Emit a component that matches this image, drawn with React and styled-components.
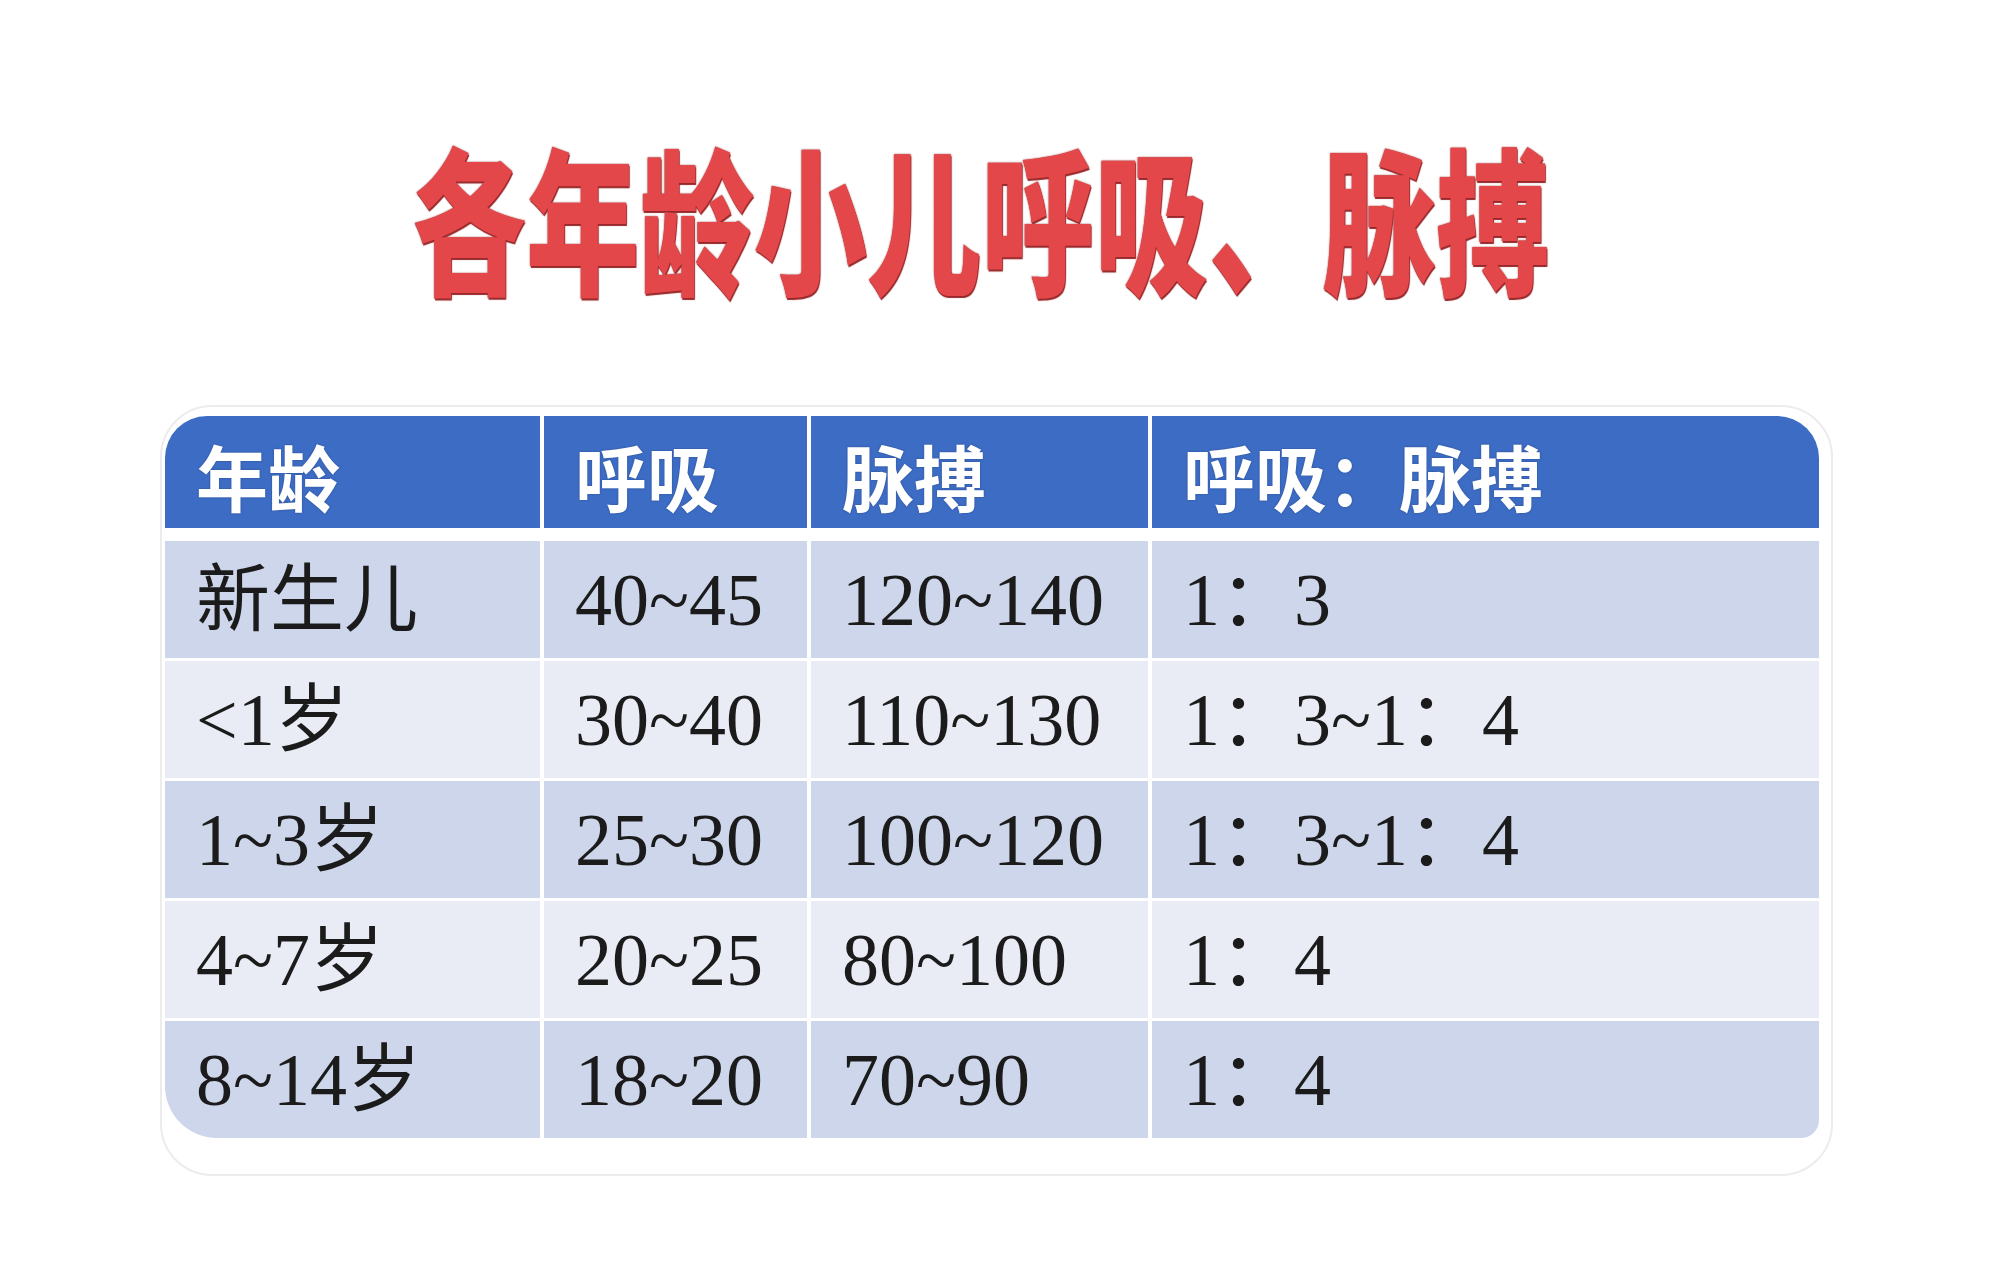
import React from 'react';
import styled, { createGlobalStyle } from 'styled-components';

const GlobalStyle = createGlobalStyle`
  html, body {
    margin: 0;
    padding: 0;
    background: #ffffff;
  }
  body {
    font-family: 'Noto Sans CJK SC', 'Noto Sans', sans-serif;
  }
`;

const headers = ['年龄', '呼吸', '脉搏', '呼吸：脉搏'];

const rows = [
  ['新生儿', '40~45', '120~140', '1：3'],
  ['<1岁', '30~40', '110~130', '1：3~1：4'],
  ['1~3岁', '25~30', '100~120', '1：3~1：4'],
  ['4~7岁', '20~25', '80~100', '1：4'],
  ['8~14岁', '18~20', '70~90', '1：4'],
];

function App() {
  return (
    <Page>
      <GlobalStyle />
      <TitleWrap>
        <Title>各年龄小儿呼吸、脉搏</Title>
      </TitleWrap>
      <Card>
        <Table>
          <HeadRow>
            {headers.map((h) => (
              <HeadCell key={h}>{h}</HeadCell>
            ))}
          </HeadRow>
          {rows.map((row, i) => (
            <BodyRow key={row[0]} striped={i % 2 === 0}>
              {row.map((cell, j) => (
                <Cell key={j}>{cell}</Cell>
              ))}
            </BodyRow>
          ))}
        </Table>
      </Card>
    </Page>
  );
}

const Page = styled.div`
  width: 1993px;
  height: 1280px;
  display: flex;
  flex-direction: column;
  align-items: center;
  overflow: hidden;
`;

const TitleWrap = styled.div`
  margin-top: 136px;
  height: 158px;
  width: 100%;
  display: flex;
  justify-content: center;
  padding-right: 32px;
  box-sizing: border-box;
`;

const Title = styled.h1`
  margin: 0;
  font-family: 'Noto Sans CJK SC', sans-serif;
  font-weight: 800;
  font-size: 158px;
  line-height: 158px;
  color: #e4474a;
  white-space: nowrap;
  transform: scaleX(0.72);
  text-shadow: 0 0 2px #8e2326, 1px 2px 1px #9a2a2c;
`;

const Card = styled.div`
  margin-top: 111px;
  width: 1673px;
  box-sizing: border-box;
  padding: 9px 12px 36px 3px;
  border: 2px solid #ececec;
  border-radius: 52px;
  background: #ffffff;
`;

const Table = styled.div`
  display: flex;
  flex-direction: column;
  background: #ffffff;
  border-radius: 42px 42px 18px 52px;
  overflow: hidden;
`;

const columns = '375px 263px 337px 1fr';

const HeadRow = styled.div`
  display: grid;
  grid-template-columns: ${columns};
  column-gap: 4px;
  height: 112px;
  margin-bottom: 13px;
`;

const HeadCell = styled.div`
  background: #3d6cc4;
  display: flex;
  align-items: center;
  padding-left: 31px;
  padding-top: 6px;
  box-sizing: border-box;
  color: #ffffff;
  font-family: 'Noto Sans CJK SC', sans-serif;
  font-weight: 700;
  font-size: 72px;
  line-height: 1;
  text-shadow: 0 0 2px rgba(20, 40, 90, 0.5);
`;

const BodyRow = styled.div`
  display: grid;
  grid-template-columns: ${columns};
  column-gap: 4px;
  height: 117px;
  & + & {
    margin-top: 3px;
  }
  & > div {
    background: ${(props) => (props.striped ? '#ced6eb' : '#e9ebf5')};
  }
`;

const Cell = styled.div`
  display: flex;
  align-items: center;
  padding-left: 31px;
  box-sizing: border-box;
  color: #1b1b1b;
  font-family: 'Liberation Serif', 'Noto Sans CJK SC', serif;
  font-size: 74px;
  line-height: 1;
  white-space: nowrap;
`;

export default App;
